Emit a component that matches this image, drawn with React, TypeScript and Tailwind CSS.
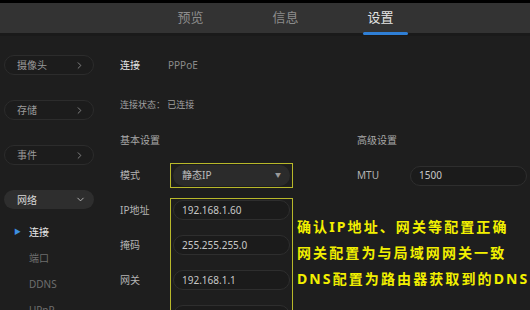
import { ChevronRight, ChevronDown } from "lucide-react";

const font = { fontFamily: '"Noto Sans", "Noto Sans CJK SC", sans-serif' };

function SidePill({ label }: { label: string }) {
  return (
    <div className="h-[20px] w-[90px] rounded-full border border-[#2c2c2c] bg-[#1c1c1c] flex items-center justify-between pl-[12px] pr-[8px] mb-[25px]">
      <span className="text-[10px] text-[#9a9a9a] leading-none">{label}</span>
      <ChevronRight size={11} strokeWidth={2} className="text-[#8a8a8a]" />
    </div>
  );
}

function Field({ value }: { value: string }) {
  return (
    <div className="h-[20px] w-[117px] rounded-full border border-[#2e2e2e] bg-[#1b1b1b] flex items-center pl-[8px] text-[10px] text-[#c8c8c8]">
      {value}
    </div>
  );
}

export default function App() {
  return (
    <div className="w-[530px] h-[310px] overflow-hidden bg-[#1e1e1e] flex flex-col" style={font}>
      <div className="h-[36px] shrink-0 border-t-[3px] border-black bg-[#333333] border-b-[3px] border-b-[#1a1a1a] flex pl-[143px]">
        <div className="w-[95px] flex items-center justify-center text-[13px] text-[#8c8c8c]">预览</div>
        <div className="w-[95px] flex items-center justify-center text-[13px] text-[#8c8c8c]">信息</div>
        <div className="w-[95px] relative flex items-center justify-center text-[13px] text-[#e4e4e4]">
          设置
          <div className="absolute bottom-[-2px] left-[30px] w-[45px] h-[3px] rounded-full bg-[#2f7fd6]" />
        </div>
      </div>

      <div className="flex flex-1 min-h-0">
        <div className="w-[120px] shrink-0 pl-[4px] pt-[19px]">
          <SidePill label="摄像头" />
          <SidePill label="存储" />
          <SidePill label="事件" />
          <div className="h-[19px] w-[90px] rounded-full bg-[#2e2e2e] flex items-center justify-between pl-[13px] pr-[8px]">
            <span className="text-[10px] text-[#d8d8d8] leading-none">网络</span>
            <ChevronDown size={11} strokeWidth={2} className="text-[#bdbdbd]" />
          </div>
          <div className="mt-[10px] flex flex-col text-[10px]">
            <div className="h-[26px] flex items-center">
              <span className="w-[8px] ml-[10px] mr-[7px] text-[7px] text-[#3d8fe0]">▶</span>
              <span className="text-[#e8e8e8]">连接</span>
            </div>
            <div className="h-[26px] flex items-center pl-[25px] text-[#6e6e6e]">端口</div>
            <div className="h-[26px] flex items-center pl-[25px] text-[#6e6e6e]">DDNS</div>
            <div className="h-[26px] flex items-center pl-[25px] text-[#6e6e6e]">UPnP</div>
          </div>
        </div>

        <div className="flex-1 relative pt-[21px]">
          <div className="flex items-center h-[16px] text-[10px]">
            <span className="w-[48px] text-[#e6e6e6]">连接</span>
            <span className="text-[#8a8a8a]">PPPoE</span>
          </div>
          <div className="mt-[24px] h-[16px] flex items-center text-[9px] text-[#a0a0a0]">连接状态： 已连接</div>
          <div className="flex mt-[19px]">
            <div className="w-[237px]">
              <div className="h-[16px] flex items-center text-[10px] text-[#a8a8a8]">基本设置</div>
              <div className="mt-[15px] flex items-center">
                <span className="w-[50px] text-[10px] text-[#b4b4b4]">模式</span>
                <div className="w-[123px] h-[25px] border border-[#b8b82a] flex items-center justify-center">
                  <div className="w-[117px] h-[21px] rounded-full bg-[#2b2b2b] flex items-center justify-between pl-[9px] pr-[9px] text-[10px] text-[#bdbdbd]">
                    静态IP
                    <span className="text-[6px] text-[#9a9a9a]">▼</span>
                  </div>
                </div>
              </div>
              <div className="mt-[10px] flex">
                <div className="w-[50px] flex flex-col pt-[2px] gap-[15px] text-[10px] text-[#b4b4b4]">
                  <span className="h-[20px] flex items-center">IP地址</span>
                  <span className="h-[20px] flex items-center">掩码</span>
                  <span className="h-[20px] flex items-center">网关</span>
                </div>
                <div className="w-[123px] h-[140px] border border-[#b8b82a] flex flex-col items-center pt-[1px] gap-[15px]">
                  <Field value="192.168.1.60" />
                  <Field value="255.255.255.0" />
                  <Field value="192.168.1.1" />
                  <Field value="" />
                </div>
              </div>
            </div>
            <div className="flex-1">
              <div className="h-[16px] flex items-center text-[10px] text-[#a8a8a8]">高级设置</div>
              <div className="mt-[15px] h-[25px] flex items-center">
                <span className="w-[53px] text-[10px] text-[#b4b4b4]">MTU</span>
                <div className="w-[117px] h-[20px] rounded-full border border-[#2e2e2e] bg-[#1b1b1b] flex items-center pl-[8px] text-[10px] text-[#c8c8c8]">
                  1500
                </div>
              </div>
            </div>
          </div>

          <div className="absolute left-[177px] top-[178px] flex flex-col text-[14px] font-bold tracking-[2.1px] text-[#f2f000] leading-[26px] whitespace-nowrap">
            <span>确认IP地址、网关等配置正确</span>
            <span>网关配置为与局域网网关一致</span>
            <span>DNS配置为路由器获取到的DNS</span>
          </div>
        </div>
      </div>
    </div>
  );
}
